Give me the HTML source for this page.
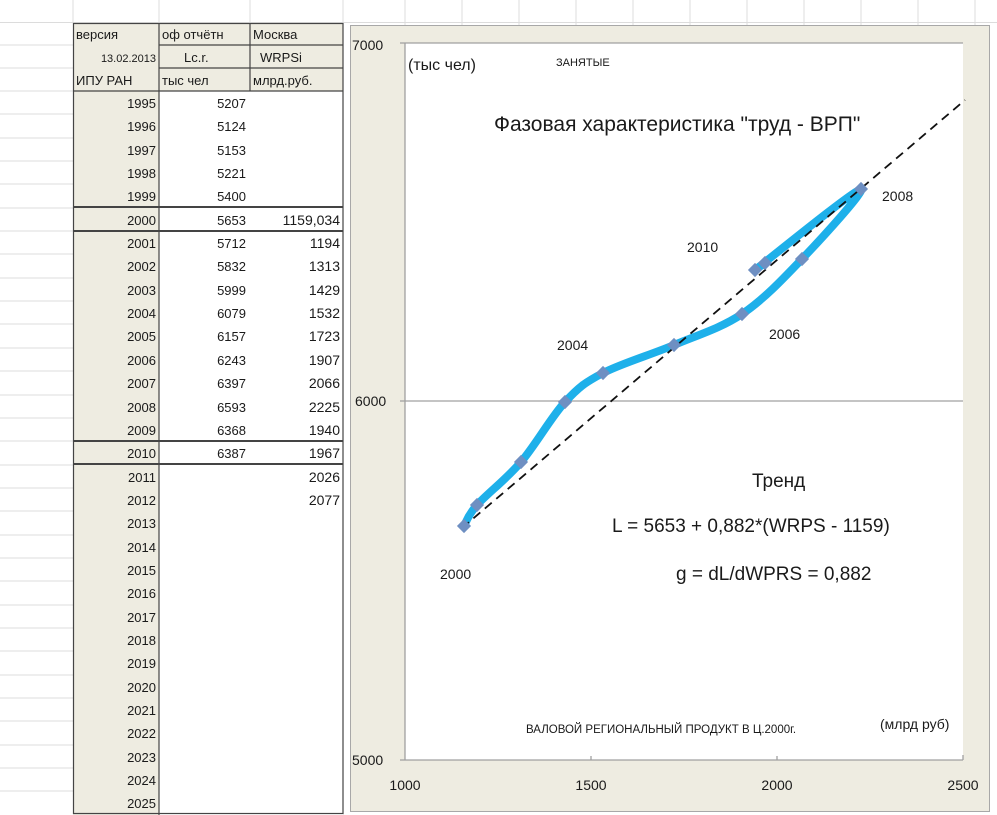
<!DOCTYPE html>
<html><head><meta charset="utf-8"><style>
html,body{margin:0;padding:0;background:#fff;width:997px;height:815px;overflow:hidden}
svg{display:block}
text{font-family:"Liberation Sans","DejaVu Sans",sans-serif;fill:#1a1a1a}
.t{font-size:13px}
.r{text-anchor:end}
</style></head><body>
<svg width="997" height="815" viewBox="0 0 997 815">
<g stroke="#dcdcdc" stroke-width="1">
<line x1="0" y1="22.5" x2="997" y2="22.5"/>
<line x1="0" y1="45" x2="73" y2="45"/><line x1="0" y1="68" x2="73" y2="68"/><line x1="0" y1="91" x2="73" y2="91"/>
<line x1="0" y1="114" x2="73" y2="114"/><line x1="0" y1="138" x2="73" y2="138"/><line x1="0" y1="161" x2="73" y2="161"/>
<line x1="0" y1="184" x2="73" y2="184"/><line x1="0" y1="208" x2="73" y2="208"/><line x1="0" y1="231" x2="73" y2="231"/>
<line x1="0" y1="254" x2="73" y2="254"/><line x1="0" y1="278" x2="73" y2="278"/><line x1="0" y1="301" x2="73" y2="301"/>
<line x1="0" y1="324" x2="73" y2="324"/><line x1="0" y1="348" x2="73" y2="348"/><line x1="0" y1="371" x2="73" y2="371"/>
<line x1="0" y1="395" x2="73" y2="395"/><line x1="0" y1="418" x2="73" y2="418"/><line x1="0" y1="441" x2="73" y2="441"/>
<line x1="0" y1="465" x2="73" y2="465"/><line x1="0" y1="488" x2="73" y2="488"/><line x1="0" y1="511" x2="73" y2="511"/>
<line x1="0" y1="535" x2="73" y2="535"/><line x1="0" y1="558" x2="73" y2="558"/><line x1="0" y1="581" x2="73" y2="581"/>
<line x1="0" y1="605" x2="73" y2="605"/><line x1="0" y1="628" x2="73" y2="628"/><line x1="0" y1="651" x2="73" y2="651"/>
<line x1="0" y1="675" x2="73" y2="675"/><line x1="0" y1="698" x2="73" y2="698"/><line x1="0" y1="721" x2="73" y2="721"/>
<line x1="0" y1="745" x2="73" y2="745"/><line x1="0" y1="768" x2="73" y2="768"/><line x1="0" y1="791" x2="73" y2="791"/>
<line x1="73" y1="0" x2="73" y2="23"/><line x1="159" y1="0" x2="159" y2="23"/><line x1="250" y1="0" x2="250" y2="23"/>
<line x1="343" y1="0" x2="343" y2="815"/><line x1="405" y1="0" x2="405" y2="25"/><line x1="462" y1="0" x2="462" y2="25"/>
<line x1="519" y1="0" x2="519" y2="25"/><line x1="576" y1="0" x2="576" y2="25"/><line x1="633" y1="0" x2="633" y2="25"/>
<line x1="690" y1="0" x2="690" y2="25"/><line x1="747" y1="0" x2="747" y2="25"/><line x1="804" y1="0" x2="804" y2="25"/>
<line x1="861" y1="0" x2="861" y2="25"/><line x1="918" y1="0" x2="918" y2="25"/><line x1="975" y1="0" x2="975" y2="25"/>
</g>
<rect x="73" y="23" width="86" height="792" fill="#eeece1"/>
<rect x="159" y="23" width="184" height="68" fill="#eeece1"/>
<rect x="159" y="91" width="184" height="724" fill="#fff"/>
<g stroke="#444" stroke-width="1.2" fill="none">
<rect x="73.5" y="23.5" width="269.5" height="790"/>
<line x1="159" y1="23" x2="159" y2="815"/>
<line x1="250" y1="23" x2="250" y2="91"/>
<line x1="159" y1="45" x2="343" y2="45"/>
<line x1="159" y1="68" x2="343" y2="68"/>
<line x1="73" y1="91" x2="343" y2="91"/>
<line x1="73" y1="207" x2="343" y2="207" stroke-width="2"/>
<line x1="73" y1="231" x2="343" y2="231" stroke-width="2"/>
<line x1="73" y1="441" x2="343" y2="441" stroke-width="2"/>
<line x1="73" y1="464" x2="343" y2="464" stroke-width="2"/>
</g>
<g>
<text x="76" y="39" class="t">версия</text>
<text x="162" y="39" class="t">оф отчётн</text>
<text x="253" y="39" class="t">Москва</text>
<text x="156" y="62" class="r" font-size="11">13.02.2013</text>
<text x="184" y="62" class="t">Lc.r.</text>
<text x="260" y="62" class="t">WRPSi</text>
<text x="76" y="85" class="t">ИПУ РАН</text>
<text x="162" y="85" class="t">тыс чел</text>
<text x="253" y="85" class="t">млрд.руб.</text>
</g>
<g>
<text x="156" y="108" class="t r">1995</text><text x="246" y="108" class="t r">5207</text>
<text x="156" y="131" class="t r">1996</text><text x="246" y="131" class="t r">5124</text>
<text x="156" y="155" class="t r">1997</text><text x="246" y="155" class="t r">5153</text>
<text x="156" y="178" class="t r">1998</text><text x="246" y="178" class="t r">5221</text>
<text x="156" y="201" class="t r">1999</text><text x="246" y="201" class="t r">5400</text>
<text x="156" y="225" class="t r">2000</text><text x="246" y="225" class="t r">5653</text><text x="340" y="225" class="r" font-size="14">1159,034</text>
<text x="156" y="248" class="t r">2001</text><text x="246" y="248" class="t r">5712</text><text x="340" y="248" class="r" font-size="14">1194</text>
<text x="156" y="271" class="t r">2002</text><text x="246" y="271" class="t r">5832</text><text x="340" y="271" class="r" font-size="14">1313</text>
<text x="156" y="295" class="t r">2003</text><text x="246" y="295" class="t r">5999</text><text x="340" y="295" class="r" font-size="14">1429</text>
<text x="156" y="318" class="t r">2004</text><text x="246" y="318" class="t r">6079</text><text x="340" y="318" class="r" font-size="14">1532</text>
<text x="156" y="341" class="t r">2005</text><text x="246" y="341" class="t r">6157</text><text x="340" y="341" class="r" font-size="14">1723</text>
<text x="156" y="365" class="t r">2006</text><text x="246" y="365" class="t r">6243</text><text x="340" y="365" class="r" font-size="14">1907</text>
<text x="156" y="388" class="t r">2007</text><text x="246" y="388" class="t r">6397</text><text x="340" y="388" class="r" font-size="14">2066</text>
<text x="156" y="412" class="t r">2008</text><text x="246" y="412" class="t r">6593</text><text x="340" y="412" class="r" font-size="14">2225</text>
<text x="156" y="435" class="t r">2009</text><text x="246" y="435" class="t r">6368</text><text x="340" y="435" class="r" font-size="14">1940</text>
<text x="156" y="458" class="t r">2010</text><text x="246" y="458" class="t r">6387</text><text x="340" y="458" class="r" font-size="14">1967</text>
<text x="156" y="482" class="t r">2011</text><text x="340" y="482" class="r" font-size="14">2026</text>
<text x="156" y="505" class="t r">2012</text><text x="340" y="505" class="r" font-size="14">2077</text>
<text x="156" y="528" class="t r">2013</text>
<text x="156" y="552" class="t r">2014</text>
<text x="156" y="575" class="t r">2015</text>
<text x="156" y="598" class="t r">2016</text>
<text x="156" y="622" class="t r">2017</text>
<text x="156" y="645" class="t r">2018</text>
<text x="156" y="668" class="t r">2019</text>
<text x="156" y="692" class="t r">2020</text>
<text x="156" y="715" class="t r">2021</text>
<text x="156" y="738" class="t r">2022</text>
<text x="156" y="762" class="t r">2023</text>
<text x="156" y="785" class="t r">2024</text>
<text x="156" y="808" class="t r">2025</text>
</g>
<rect x="350.5" y="25.5" width="639" height="786" fill="#eeece1" stroke="#a8a8a8"/>
<rect x="405" y="43" width="558" height="717" fill="#fff"/>
<g stroke="#a0a0a0" stroke-width="1.3">
<line x1="400" y1="43" x2="963" y2="43"/>
<line x1="400" y1="401" x2="963" y2="401"/>
<line x1="405" y1="43" x2="405" y2="760"/>
<line x1="400" y1="760" x2="963" y2="760"/>
<line x1="591" y1="760" x2="591" y2="756"/><line x1="777" y1="760" x2="777" y2="756"/><line x1="963" y1="760" x2="963" y2="755"/>
</g>
<g font-size="14">
<text x="352" y="50">7000</text>
<text x="355" y="406">6000</text>
<text x="352" y="765">5000</text>
<text x="405" y="790" text-anchor="middle">1000</text>
<text x="591" y="790" text-anchor="middle">1500</text>
<text x="777" y="790" text-anchor="middle">2000</text>
<text x="963" y="790" text-anchor="middle">2500</text>
</g>
<path d="M464,526 C466,522.5 467.5,515.7 477,505 C486.5,494.3 506.3,479.2 521,462 C535.7,444.8 551.3,416.8 565,402 C578.7,387.2 584.8,382.5 603,373 C621.2,363.5 650.8,354.8 674,345 C697.2,335.2 720.7,328.3 742,314 C763.3,299.7 782.2,279.8 802,259 C821.8,238.2 866,190 861,189 C853,190.8 771,257.7 755,270 L765,263" fill="none" stroke="#1eb0ea" stroke-width="8" stroke-linecap="round" stroke-linejoin="round"/>
<line x1="462" y1="528" x2="965" y2="100" stroke="#111" stroke-width="1.8" stroke-dasharray="9,6"/>
<g fill="#6e8fc2">
<rect x="459" y="521" width="10" height="10" transform="rotate(45 464 526)"/>
<rect x="472" y="500" width="10" height="10" transform="rotate(45 477 505)"/>
<rect x="516" y="457" width="10" height="10" transform="rotate(45 521 462)"/>
<rect x="560" y="397" width="10" height="10" transform="rotate(45 565 402)"/>
<rect x="598" y="368" width="10" height="10" transform="rotate(45 603 373)"/>
<rect x="669" y="340" width="10" height="10" transform="rotate(45 674 345)"/>
<rect x="737" y="309" width="10" height="10" transform="rotate(45 742 314)"/>
<rect x="797" y="254" width="10" height="10" transform="rotate(45 802 259)"/>
<rect x="856" y="184" width="10" height="10" transform="rotate(45 861 189)"/>
<rect x="750" y="265" width="10" height="10" transform="rotate(45 755 270)"/>
<rect x="760" y="258" width="10" height="10" transform="rotate(45 765 263)"/>
</g>
<text x="408" y="70" font-size="16">(тыс чел)</text>
<text x="556" y="66" font-size="11">ЗАНЯТЫЕ</text>
<text x="494" y="131" font-size="21">Фазовая характеристика "труд - ВРП"</text>
<g font-size="14">
<text x="882" y="201">2008</text>
<text x="687" y="252">2010</text>
<text x="769" y="339">2006</text>
<text x="557" y="350">2004</text>
<text x="440" y="579">2000</text>
</g>
<text x="752" y="487" font-size="19">Тренд</text>
<text x="612" y="532" font-size="19">L = 5653 + 0,882*(WRPS - 1159)</text>
<text x="676" y="580" font-size="19">g = dL/dWPRS = 0,882</text>
<text x="526" y="733" font-size="11.5">ВАЛОВОЙ РЕГИОНАЛЬНЫЙ ПРОДУКТ В Ц.2000г.</text>
<text x="880" y="729" font-size="14">(млрд руб)</text>
</svg>
</body></html>
